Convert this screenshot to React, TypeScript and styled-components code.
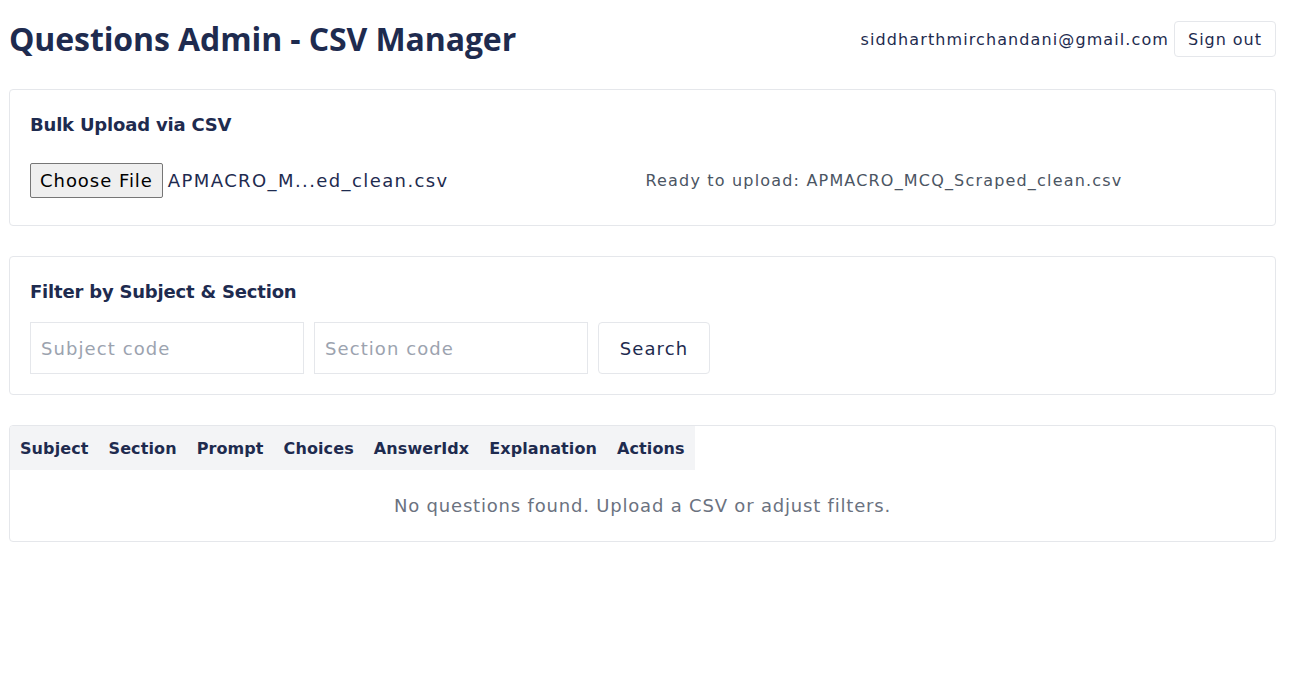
import React from "react";
import styled, { createGlobalStyle } from "styled-components";

const GlobalStyle = createGlobalStyle`
  html, body { margin: 0; padding: 0; background: #ffffff; }
  body {
    font-family: "DejaVu Sans", "Noto Sans", sans-serif;
    color: #1e2b4f;
    letter-spacing: 0.06em;
  }
  * { box-sizing: border-box; }
`;

const Page = styled.div`
  width: 1267px;
  margin-left: 9px;
  display: flex;
  flex-direction: column;
`;

const Header = styled.header`
  height: 60px;
  margin-top: 8px;
  margin-bottom: 21px;
  display: flex;
  align-items: center;
  justify-content: space-between;
`;

const Title = styled.h1`
  margin: 0;
  font-family: "Open Sans", sans-serif;
  font-size: 32px;
  font-weight: 700;
  color: #1e2b4f;
  letter-spacing: -0.1px;
`;

const UserBox = styled.div`
  display: flex;
  align-items: center;
  gap: 5px;
  margin-top: 2px;
`;

const Email = styled.span`
  font-size: 16px;
  letter-spacing: 1.1px;
  color: #1e2b4f;
`;

const OutlineButton = styled.button<{ $big?: boolean }>`
  font-family: inherit;
  letter-spacing: 0.06em;
  background: #ffffff;
  border: 1px solid #e5e7eb;
  border-radius: 4px;
  color: #1e2b4f;
  cursor: pointer;
  font-size: ${(p) => (p.$big ? "18px" : "16px")};
  height: ${(p) => (p.$big ? "52px" : "36px")};
  padding: 0;
  width: ${(p) => (p.$big ? "112px" : "102px")};
`;

const Card = styled.section<{ $flush?: boolean }>`
  border: 1px solid #e5e7eb;
  border-radius: 4px;
  padding: ${(p) => (p.$flush ? "0" : "20px")};
  margin-bottom: 30px;
  overflow: hidden;
`;

const CardTitle = styled.h2`
  margin: 0 0 16px 0;
  font-size: 18px;
  line-height: 29px;
  font-weight: 700;
  letter-spacing: -0.2px;
  color: #1e2b4f;
`;

const UploadRow = styled.div`
  display: grid;
  grid-template-columns: 1fr 1fr;
  gap: 6px;
  min-height: 50px;
  align-items: center;
`;

const FileField = styled.div`
  display: flex;
  align-items: center;
  gap: 5px;
`;

const NativeButton = styled.span`
  display: inline-flex;
  align-items: center;
  height: 35px;
  padding: 0 9px;
  background: #efefef;
  border: 1px solid #767676;
  border-radius: 2px;
  font-size: 18px;
  color: #000000;
`;

const FileName = styled.span`
  font-size: 18px;
  letter-spacing: 1.4px;
  color: #1e2b4f;
`;

const Status = styled.span`
  font-size: 16px;
  letter-spacing: 1.18px;
  color: #4b5563;
`;

const FilterRow = styled.div`
  display: flex;
  align-items: center;
  gap: 10px;
`;

const TextInput = styled.input`
  width: 274px;
  height: 52px;
  border: 1px solid #e5e7eb;
  border-radius: 0;
  padding: 0 10px;
  font-family: inherit;
  letter-spacing: 0.06em;
  font-size: 18px;
  color: #1e2b4f;
  outline: none;
  &::placeholder { color: #9ca3af; }
`;

const Table = styled.table`
  border-collapse: collapse;
`;

const Th = styled.th`
  background: #f3f4f6;
  padding: 10px;
  height: 44px;
  font-size: 16px;
  font-weight: 700;
  letter-spacing: 0.1px;
  text-align: left;
  color: #1e2b4f;
  white-space: nowrap;
`;

const Empty = styled.div`
  padding: 24px;
  text-align: center;
  font-size: 18px;
  line-height: 23px;
  letter-spacing: 0.045em;
  color: #6b7280;
`;

const columns = ["Subject", "Section", "Prompt", "Choices", "AnswerIdx", "Explanation", "Actions"];

export default function App() {
  return (
    <>
      <GlobalStyle />
      <Page>
        <Header>
          <Title>Questions Admin - CSV Manager</Title>
          <UserBox>
            <Email>siddharthmirchandani@gmail.com</Email>
            <OutlineButton>Sign out</OutlineButton>
          </UserBox>
        </Header>

        <Card>
          <CardTitle>Bulk Upload via CSV</CardTitle>
          <UploadRow>
            <FileField>
              <NativeButton>Choose File</NativeButton>
              <FileName>APMACRO_M...ed_clean.csv</FileName>
            </FileField>
            <Status>Ready to upload: APMACRO_MCQ_Scraped_clean.csv</Status>
          </UploadRow>
        </Card>

        <Card>
          <CardTitle>Filter by Subject &amp; Section</CardTitle>
          <FilterRow>
            <TextInput placeholder="Subject code" />
            <TextInput placeholder="Section code" />
            <OutlineButton $big>Search</OutlineButton>
          </FilterRow>
        </Card>

        <Card $flush>
          <Table>
            <thead>
              <tr>
                {columns.map((c) => (
                  <Th key={c}>{c}</Th>
                ))}
              </tr>
            </thead>
          </Table>
          <Empty>No questions found. Upload a CSV or adjust filters.</Empty>
        </Card>
      </Page>
    </>
  );
}
